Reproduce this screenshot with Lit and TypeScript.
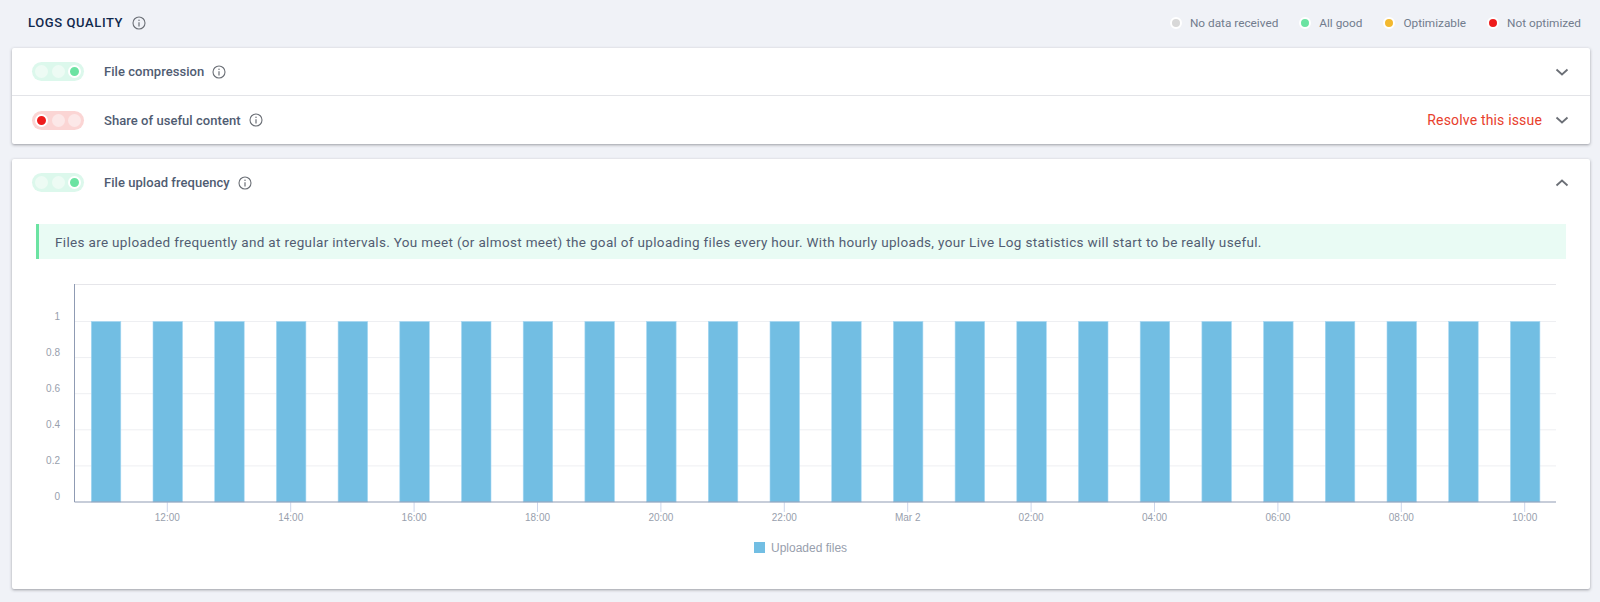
import { LitElement, css, html, svg } from "lit";
import { customElement } from "lit/decorators.js";

const infoIcon = html`<svg class="info" width="14" height="14" viewBox="0 0 14 14">
  <circle cx="7" cy="7" r="6" fill="none" stroke="#6b6f76" stroke-width="1.1"></circle>
  <circle cx="7" cy="4.3" r="0.75" fill="#6b6f76"></circle>
  <path d="M7 6.2v4.2" stroke="#6b6f76" stroke-width="1.2" fill="none"></path>
</svg>`;

const chevron = (up: boolean) => html`<svg class="chevron" width="14" height="10" viewBox="0 0 14 10">
  <path d=${up ? "M1.5 7.5 7 2.5l5.5 5" : "M1.5 2.5 7 7.5l5.5-5"} fill="none" stroke="#6b6f76" stroke-width="1.8"></path>
</svg>`;

const legendItems = [
  { label: "No data received", color: "#d8d8d8" },
  { label: "All good", color: "#6be3a2" },
  { label: "Optimizable", color: "#f3b92f" },
  { label: "Not optimized", color: "#ee1c1c" },
];

// chart geometry, in page pixels relative to the svg box
const W = 1540;
const H = 276;
const X0 = 38.5;
const BOTTOM = 223;
const ONE = 42.5;
const STEP = (BOTTOM - ONE) / 5;

function uploadChart() {
  const yLabels = ["0", "0.2", "0.4", "0.6", "0.8", "1"];
  const xLabels = ["12:00", "14:00", "16:00", "18:00", "20:00", "22:00", "Mar 2", "02:00", "04:00", "06:00", "08:00", "10:00"];
  return html`<svg class="chart" width=${W} height=${H} viewBox="0 0 ${W} ${H}">
    <path d="M${X0} 5.5H1520" stroke="#e6e6ea" fill="none"></path>
    ${yLabels.map((label, i) => {
      const y = BOTTOM - i * STEP;
      return svg`
        ${i > 0 ? svg`<path d="M${X0} ${y}H1520" stroke="#eeeff2" fill="none"></path>` : ""}
        <text x="24" y=${y - 2} text-anchor="end" class="axis">${label}</text>`;
    })}
    ${Array.from({ length: 24 }, (_, i) => svg`<rect x=${55.3 + i * 61.7} y=${ONE} width="29.5" height=${BOTTOM - ONE}
      fill="#72bee3" stroke="#a5d8f3" stroke-width="0.6"></rect>`)}
    ${xLabels.map((label, i) => {
      const x = 131.3 + i * 123.4;
      return svg`
        <path d="M${x} ${BOTTOM}v10" stroke="#ccd6eb" fill="none"></path>
        <text x=${x} y="242" text-anchor="middle" class="axis">${label}</text>`;
    })}
    <path d="M${X0} 5V${BOTTOM}H1520" stroke="#8f9bb3" fill="none"></path>
    <rect x="718" y="263" width="11" height="11" fill="#72bee3"></rect>
  </svg>`;
}

@customElement("status-pill")
export class StatusPill extends LitElement {
  static properties = { state: {} };
  state = "good";

  static styles = css`
    :host {
      display: block;
    }
    .pill {
      display: flex;
      align-items: center;
      justify-content: space-between;
      width: 52px;
      height: 19px;
      padding: 0 3px;
      box-sizing: border-box;
      border-radius: 10px;
    }
    .good {
      background: #dcf8ec;
    }
    .bad {
      background: #fbd5d4;
      flex-direction: row-reverse;
    }
    .lamp {
      width: 13px;
      height: 13px;
      border-radius: 50%;
      box-sizing: border-box;
    }
    .good .lamp {
      background: #edfbf4;
    }
    .bad .lamp {
      background: #fce8e8;
    }
    .good .lamp.on {
      background: #6be3a2;
      border: 2px solid #fff;
    }
    .bad .lamp.on {
      background: #ee1c1c;
      border: 2px solid #fff;
    }
  `;

  render() {
    return html`<div class="pill ${this.state}">
      <span class="lamp"></span><span class="lamp"></span><span class="lamp on"></span>
    </div>`;
  }
}

@customElement("app-root")
export class AppRoot extends LitElement {
  static styles = css`
    :host {
      display: block;
      height: 602px;
      background: #f0f2f7;
      font-family: Roboto, "Liberation Sans", sans-serif;
      overflow: hidden;
    }
    .top {
      display: flex;
      align-items: center;
      justify-content: space-between;
      height: 48px;
      padding: 0 19px 3px 28px;
      box-sizing: border-box;
    }
    .title {
      display: flex;
      align-items: center;
      gap: 9px;
      font-size: 13px;
      font-weight: 500;
      letter-spacing: 0.6px;
      color: #10294d;
    }
    .legend {
      display: flex;
      gap: 21px;
      font-size: 11.8px;
      color: #727c8d;
    }
    .legend span {
      display: flex;
      align-items: center;
      gap: 8px;
    }
    .dot {
      width: 12px;
      height: 12px;
      box-sizing: border-box;
      border: 2px solid #fff;
      border-radius: 50%;
    }
    .card {
      margin: 0 10px 0 12px;
      background: #fff;
      border-radius: 2px;
      box-shadow: 0 1px 3px rgba(50, 50, 60, 0.45);
    }
    .card + .card {
      margin-top: 15px;
    }
    .row {
      display: flex;
      align-items: center;
      height: 47px;
      padding: 0 21px 0 20px;
    }
    .row + .row {
      border-top: 1px solid #e3e4e8;
      height: 48px;
    }
    .name {
      display: flex;
      align-items: center;
      gap: 8px;
      margin-left: 20px;
      font-size: 13px;
      font-weight: 500;
      letter-spacing: 0.05px;
      color: #505c72;
    }
    .resolve {
      margin-left: auto;
      font-size: 14px;
      letter-spacing: 0.17px;
      color: #e8402c;
    }
    .chevron {
      margin-left: auto;
    }
    .resolve + .chevron {
      margin-left: 13px;
    }
    .body {
      padding: 18px 24px 0 24px;
      height: 383px;
      box-sizing: border-box;
    }
    .note {
      height: 35px;
      display: flex;
      align-items: center;
      padding-left: 16px;
      background: #e9fbf4;
      border-left: 3px solid #6be3a2;
      font-size: 13.5px;
      letter-spacing: 0.33px;
      color: #525d72;
    }
    .plot {
      position: relative;
      margin-top: 20px;
    }
    .chart {
      display: block;
      overflow: visible;
    }
    .chart text.axis {
      font: 10px "Liberation Sans", Arial, sans-serif;
      fill: #98a0ad;
    }
    .series {
      position: absolute;
      left: 735px;
      top: 262px;
      font: 12px "Liberation Sans", Arial, sans-serif;
      color: #98a0ad;
    }
  `;

  render() {
    return html`
      <div class="top">
        <div class="title">LOGS QUALITY ${infoIcon}</div>
        <div class="legend">
          ${legendItems.map(
            (item) => html`<span><i class="dot" style="background:${item.color}"></i>${item.label}</span>`,
          )}
        </div>
      </div>
      <div class="card">
        <div class="row">
          <status-pill state="good"></status-pill>
          <div class="name">File compression ${infoIcon}</div>
          ${chevron(false)}
        </div>
        <div class="row">
          <status-pill state="bad"></status-pill>
          <div class="name">Share of useful content ${infoIcon}</div>
          <div class="resolve">Resolve this issue</div>
          ${chevron(false)}
        </div>
      </div>
      <div class="card">
        <div class="row">
          <status-pill state="good"></status-pill>
          <div class="name">File upload frequency ${infoIcon}</div>
          ${chevron(true)}
        </div>
        <div class="body">
          <div class="note">
            Files are uploaded frequently and at regular intervals. You meet (or almost meet) the goal of uploading files every hour. With hourly uploads, your Live Log statistics will start to be really useful.
          </div>
          <div class="plot">
            ${uploadChart()}
            <div class="series">Uploaded files</div>
          </div>
        </div>
      </div>
    `;
  }
}
